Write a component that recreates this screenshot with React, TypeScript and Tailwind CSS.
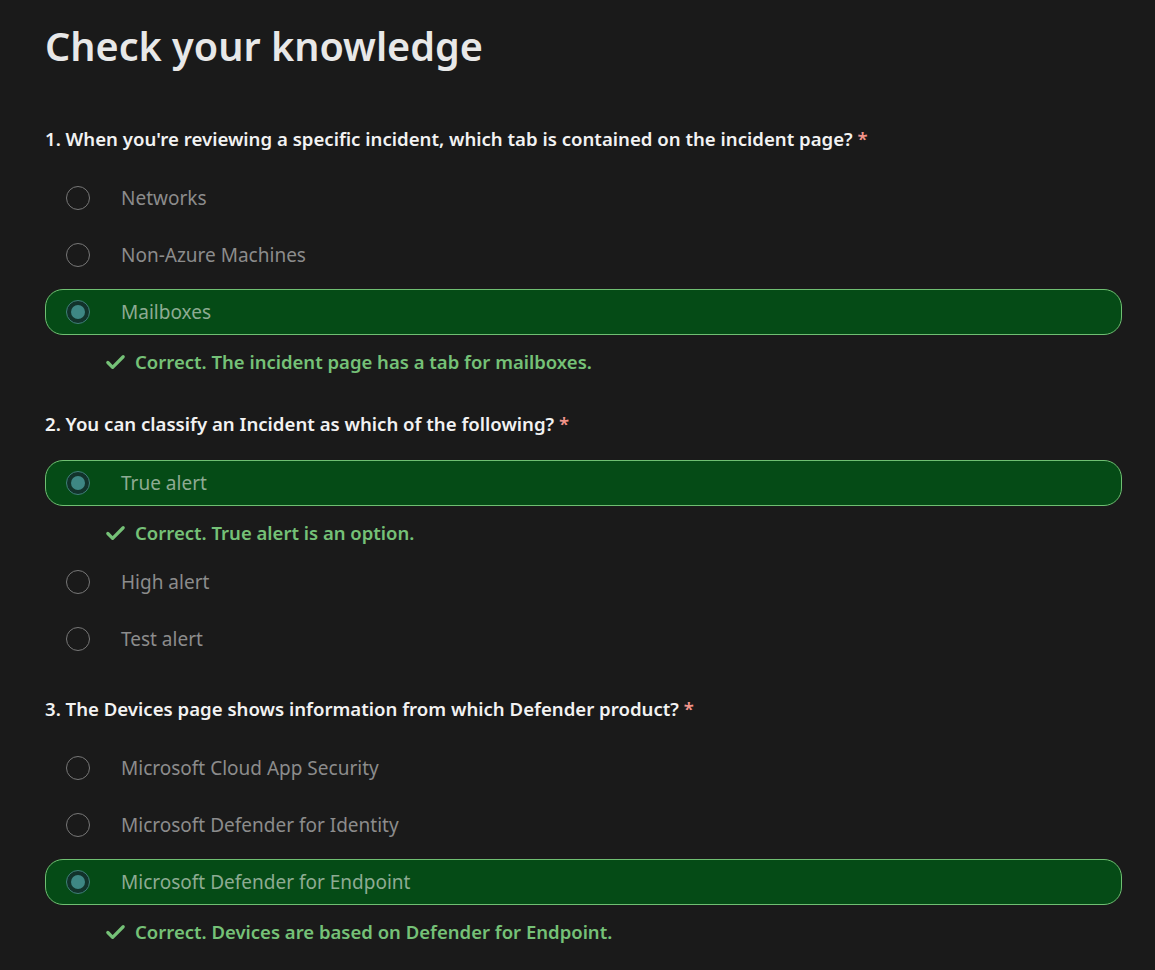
import { Check } from 'lucide-react';

type Option = { label: string; selected?: boolean; feedback?: string };
type Question = { title: string; options: Option[] };

const questions: Question[] = [
  {
    title: "1. When you're reviewing a specific incident, which tab is contained on the incident page?",
    options: [
      { label: 'Networks' },
      { label: 'Non-Azure Machines' },
      { label: 'Mailboxes', selected: true, feedback: 'Correct. The incident page has a tab for mailboxes.' },
    ],
  },
  {
    title: '2. You can classify an Incident as which of the following?',
    options: [
      { label: 'True alert', selected: true, feedback: 'Correct. True alert is an option.' },
      { label: 'High alert' },
      { label: 'Test alert' },
    ],
  },
  {
    title: '3. The Devices page shows information from which Defender product?',
    options: [
      { label: 'Microsoft Cloud App Security' },
      { label: 'Microsoft Defender for Identity' },
      { label: 'Microsoft Defender for Endpoint', selected: true, feedback: 'Correct. Devices are based on Defender for Endpoint.' },
    ],
  },
];

const Radio = ({ selected }: { selected?: boolean }) =>
  selected ? (
    <span className="flex h-6 w-6 flex-shrink-0 items-center justify-center rounded-full border border-[#3f8078] bg-[#12332b]">
      <span className="h-[14px] w-[14px] rounded-full bg-[#3e8784]" />
    </span>
  ) : (
    <span className="h-6 w-6 flex-shrink-0 rounded-full border border-[#777777]" />
  );

const OptionRow = ({ option }: { option: Option }) => (
  <div>
    <div
      className={
        option.selected
          ? 'flex h-[46px] items-center rounded-[18px] border border-[#6fbf72] bg-[#054b16] pl-5'
          : 'flex h-[46px] items-center rounded-[18px] border border-transparent pl-5'
      }
    >
      <Radio selected={option.selected} />
      <span className={option.selected ? 'ml-[31px] text-[19px] text-[#8eab93]' : 'ml-[31px] text-[19px] text-[#8c8c8c]'}>
        {option.label}
      </span>
    </div>
    {option.feedback ? (
      <div className="mt-[12px] flex h-[30px] items-center pl-[59px] text-[18.5px] font-semibold text-[#75c177]">
        <Check size={23} strokeWidth={3.4} className="mr-[8px]" />
        {option.feedback}
      </div>
    ) : null}
  </div>
);

export default function App() {
  return (
    <div
      className="min-h-[970px] bg-[#1a1a1a] pl-[45px] pr-[33px] pt-[18px]"
      style={{ fontFamily: '"Segoe UI", "Noto Sans", sans-serif' }}
    >
      <h1 className="text-[39.6px] font-semibold leading-[56px] text-[#e8e8e8]">Check your knowledge</h1>
      <div className="mt-[51px] flex flex-col gap-[33px]">
        {questions.map((q, i) => (
          <div key={i}>
            <h2 className="text-[18.6px] font-semibold leading-[28px] text-[#f2f2f2]">
              {q.title} <span className="text-[#f1948a]">*</span>
            </h2>
            <div className="mt-[22px] flex flex-col gap-[11px]">
              {q.options.map((o, j) => (
                <OptionRow key={j} option={o} />
              ))}
            </div>
          </div>
        ))}
      </div>
    </div>
  );
}
